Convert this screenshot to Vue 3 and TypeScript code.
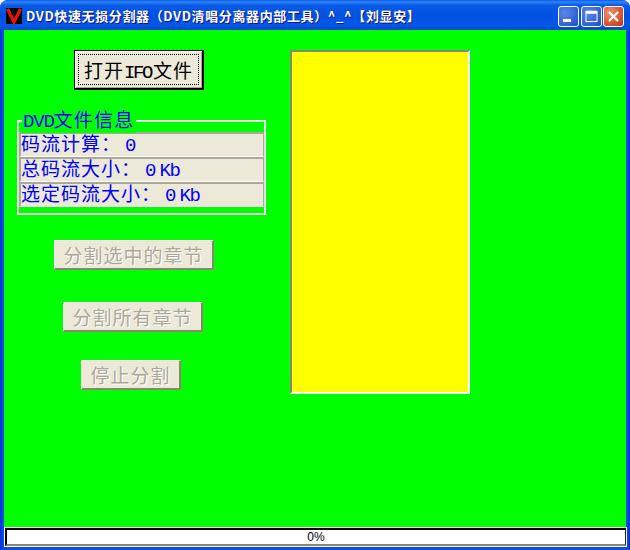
<template>
  <div class="window">
    <header class="titlebar">
      <svg class="app-icon" width="16" height="16" viewBox="0 0 16 16">
        <rect width="16" height="16" fill="#000" />
        <path d="M1.5 1 L8 14 L14.5 1" fill="none" stroke="#f01010" stroke-width="3.2" />
      </svg>
      <span class="title">{{ title }}</span>
      <div class="caption-buttons">
        <button class="caption min">
          <svg width="21" height="21" viewBox="0 0 21 21"><rect x="5" y="13" width="8" height="3" fill="#fff" /></svg>
        </button>
        <button class="caption max">
          <svg width="21" height="21" viewBox="0 0 21 21">
            <path d="M5 5.5H16M5 7H16" stroke="#fff" stroke-width="1.5" />
            <rect x="5" y="5.5" width="11" height="10" fill="none" stroke="#fff" />
          </svg>
        </button>
        <button class="caption close">
          <svg width="21" height="21" viewBox="0 0 21 21">
            <path d="M6 6L15 15M15 6L6 15" stroke="#fff" stroke-width="2.4" />
          </svg>
        </button>
      </div>
    </header>

    <main class="client">
      <div class="workspace">
        <section class="side">
          <button class="btn open">
            <span class="focus">打开<span class="latin ifo">IFO</span>文件</span>
          </button>

          <div class="group">
            <span class="group-label"><span class="latin">DVD</span>文件信息</span>
            <div v-for="row in infoRows" :key="row.label" class="info-row">
              {{ row.label }}<span class="latin value">{{ row.value }}</span>
            </div>
          </div>

          <button class="btn off split-selected" disabled>分割选中的章节</button>
          <button class="btn off split-all" disabled>分割所有章节</button>
          <button class="btn off stop" disabled>停止分割</button>
        </section>
        <div class="chapters"></div>
      </div>
      <div class="statusbar">0%</div>
    </main>
  </div>
</template>

<script setup lang="ts">
  interface InfoRow {
    label: string;
    value: string;
  }

  const title = 'DVD快速无损分割器（DVD清唱分离器内部工具）^_^【刘显安】';

  const infoRows: InfoRow[] = [
    { label: '码流计算：', value: '0' },
    { label: '总码流大小：', value: '0 Kb' },
    { label: '选定码流大小：', value: '0 Kb' },
  ];
</script>

<style scoped>
  .window {
    width: 630px;
    height: 550px;
    display: flex;
    flex-direction: column;
    box-sizing: border-box;
    background: linear-gradient(90deg, #0831d9 0, #0a4fe0 3px, #0a4fe0 627px, #0831d9 100%);
    border-radius: 8px 8px 0 0;
    overflow: hidden;
    font-family: "Noto Sans CJK SC", "Liberation Mono", sans-serif;
  }

  .titlebar {
    height: 30px;
    flex: none;
    display: flex;
    align-items: center;
    padding: 0 6px;
    box-sizing: border-box;
    background: linear-gradient(180deg, #0a58e8 0, #2f86f8 2px, #0a5ce8 5px, #0250e0 15px, #0358ea 25px, #0a47c8 30px);
  }

  .app-icon {
    flex: none;
    margin-top: 2px;
  }

  .title {
    margin-left: 4px;
    margin-top: 1px;
    color: #fff;
    font: bold 13px "Noto Sans CJK SC", sans-serif;
    letter-spacing: 0.62px;
    white-space: nowrap;
    text-shadow: 1px 1px 0 #0f1089;
  }

  .caption-buttons {
    margin-left: auto;
    margin-top: 3px;
    display: flex;
    gap: 1.5px;
  }

  .caption {
    width: 21px;
    height: 21px;
    padding: 0;
    border: 1px solid #fff;
    border-radius: 3px;
    box-sizing: border-box;
    display: block;
    background: radial-gradient(circle at 30% 30%, #5a88ea, #2f5ed8 70%, #1f45b8);
  }

  .caption svg {
    display: block;
    margin: -1px;
  }

  .caption.close {
    background: radial-gradient(circle at 30% 30%, #f09070, #d8502c 65%, #c03018);
  }

  .client {
    flex: 1;
    min-height: 0;
    margin: 0 4px 4px;
    display: flex;
    flex-direction: column;
    background: #00ff00;
  }

  .workspace {
    flex: 1;
    min-height: 0;
    display: flex;
    align-items: flex-start;
    padding-top: 20px;
  }

  .side {
    width: 286px;
    flex: none;
    display: flex;
    flex-direction: column;
    align-items: flex-start;
  }

  /* tall, narrow latin to sit next to the CJK glyphs */
  .latin {
    font-family: "Liberation Mono", monospace;
    font-size: 19px;
    letter-spacing: -1.2px;
  }

  .btn {
    display: block;
    padding: 0;
    box-sizing: border-box;
    background: #ece9d8;
    font-family: "Noto Sans CJK SC", sans-serif;
    font-size: 19px;
    letter-spacing: 1px;
    line-height: 22px;
    white-space: nowrap;
  }

  .open {
    width: 130px;
    height: 40px;
    margin-left: 70px;
    padding: 3px;
    color: #000;
    border: 1px solid #000;
    border-right-width: 2px;
    border-bottom-width: 2px;
    box-shadow: inset 1px 1px 0 #fff, inset -1px -1px 0 #aca899;
  }

  .focus {
    display: block;
    height: 100%;
    line-height: 29px;
    box-sizing: border-box;
    border: 1px dotted #000;
  }

  .ifo {
    letter-spacing: -2.4px;
    margin-right: 2px;
  }

  .off {
    height: 30px;
    color: #aca899;
    text-shadow: 1px 1px 0 #fff;
    border: 1px solid #fff;
    border-right: 2px solid #8a8672;
    border-bottom: 2px solid #8a8672;
  }

  .split-selected {
    width: 160px;
    margin: 25px 0 0 50px;
  }

  .split-all {
    width: 140px;
    margin: 32px 0 0 59px;
  }

  .stop {
    width: 100px;
    margin: 28px 0 0 77px;
  }

  .group {
    position: relative;
    width: 249px;
    height: 95px;
    margin: 30px 0 0 13px;
    padding: 11px 1px 0;
    box-sizing: border-box;
    border: 1px solid #fff;
    outline: 1px solid #cfe8c4;
    outline-offset: -2px;
  }

  .group-label {
    position: absolute;
    left: 4px;
    top: -13px;
    padding: 0 2px 0 1px;
    background: #00ff00;
    color: #0000ff;
    font-size: 19px;
    letter-spacing: 1.2px;
    line-height: 22px;
    white-space: nowrap;
  }

  .info-row {
    height: 25px;
    line-height: 17px;
    box-sizing: border-box;
    background: #ece9d8;
    color: #0000ff;
    font-size: 19px;
    letter-spacing: 1px;
    white-space: nowrap;
    border: 1px solid #fff;
    border-top: 2px solid #aca899;
    border-left: 2px solid #aca899;
    border-right-color: #aca899;
  }

  .value {
    margin-left: 4px;
    word-spacing: -6px;
  }

  .chapters {
    width: 180px;
    height: 344px;
    box-sizing: border-box;
    background: #ffff00;
    border: 2px solid #fff;
    border-top-color: #8a8672;
    border-left-color: #8a8672;
  }

  .statusbar {
    flex: none;
    height: 18px;
    margin: 0 0 0 1px;
    box-sizing: border-box;
    background: #fff;
    color: #000;
    text-align: center;
    font: 12px/15px "Liberation Sans", sans-serif;
    border: 2px solid #000;
    border-right: 1px solid #222;
    border-bottom: 2px solid #8a8672;
    outline: 1px solid #fff;
  }
</style>

<style>
  html,
  body {
    margin: 0;
    background: #fff;
    overflow: hidden;
  }
</style>
